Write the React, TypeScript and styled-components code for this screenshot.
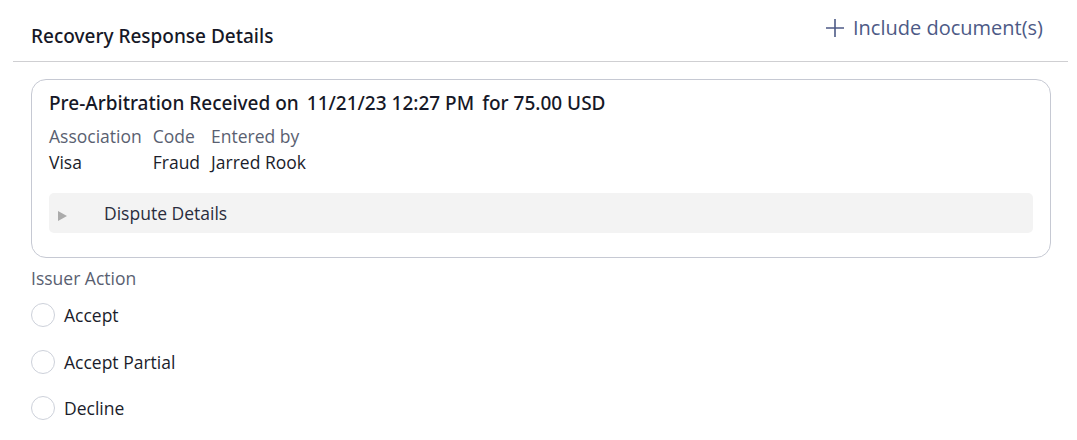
import styled, { createGlobalStyle } from "styled-components";

const GlobalStyle = createGlobalStyle`
  body {
    margin: 0;
    background: #ffffff;
    font-family: "Open Sans", "Noto Sans", sans-serif;
    color: #1b1d2b;
  }
`;

interface DetailColumn {
  label: string;
  value: string;
}

const columns: DetailColumn[] = [
  { label: "Association", value: "Visa" },
  { label: "Code", value: "Fraud" },
  { label: "Entered by", value: "Jarred Rook" },
];

const actions = ["Accept", "Accept Partial", "Decline"];

const App = () => {
  return (
    <Page>
      <GlobalStyle />
      <Header>
        <Title>Recovery Response Details</Title>
        <IncludeLink>
          <PlusIcon viewBox="0 0 20 20">
            <path d="M10 1v18M1 10h18" />
          </PlusIcon>
          Include document(s)
        </IncludeLink>
      </Header>
      <Content>
        <Card>
          <CardTitle>
            Pre-Arbitration Received on
            <Gap>11/21/23 12:27 PM</Gap>
            <Gap>for 75.00 USD</Gap>
          </CardTitle>
          <DetailGrid>
            {columns.map((c) => (
              <Label key={c.label}>{c.label}</Label>
            ))}
            {columns.map((c) => (
              <Value key={c.value}>{c.value}</Value>
            ))}
          </DetailGrid>
          <Disclosure>
            <Caret />
            <DisclosureText>Dispute Details</DisclosureText>
          </Disclosure>
        </Card>
        <ActionLabel>Issuer Action</ActionLabel>
        <RadioList>
          {actions.map((a) => (
            <RadioRow key={a}>
              <RadioCircle />
              <RadioText>{a}</RadioText>
            </RadioRow>
          ))}
        </RadioList>
      </Content>
    </Page>
  );
};

const Page = styled.div`
  padding: 0 9px 0 13px;
`;

const Header = styled.div`
  height: 62px;
  box-sizing: border-box;
  border-bottom: 1px solid #cfcfd2;
  display: flex;
  justify-content: space-between;
  align-items: flex-start;
  padding: 0 25px 0 18px;
`;

const Title = styled.h2`
  margin: 23px 0 0;
  font-family: "Noto Sans", "Open Sans", sans-serif;
  font-size: 19px;
  line-height: 26px;
  font-weight: 500;
  color: #161827;
`;

const IncludeLink = styled.a`
  margin-top: 14px;
  display: flex;
  align-items: center;
  gap: 8px;
  font-size: 20px;
  line-height: 28px;
  color: #4d5a86;
  cursor: pointer;
`;

const PlusIcon = styled.svg`
  width: 20px;
  height: 20px;
  stroke: #4d5a86;
  stroke-width: 1.6;
  fill: none;
`;

const Content = styled.div`
  padding: 0 17px 0 18px;
`;

const Card = styled.div`
  margin-top: 17px;
  border: 1px solid #c6c9d3;
  border-radius: 15px;
  padding: 10px 17px 24px;
`;

const CardTitle = styled.div`
  font-family: "Noto Sans", "Open Sans", sans-serif;
  font-size: 19px;
  line-height: 26px;
  font-weight: 500;
  color: #161827;
`;

const Gap = styled.span`
  margin-left: 8px;
`;

const DetailGrid = styled.div`
  margin-top: 7px;
  display: grid;
  grid-template-columns: repeat(3, auto);
  justify-content: start;
  column-gap: 11px;
  font-size: 17.5px;
  line-height: 26px;
`;

const Label = styled.span`
  color: #5a5f71;
`;

const Value = styled.span`
  color: #1b1d2b;
`;

const Disclosure = styled.div`
  margin-top: 18px;
  height: 40px;
  background: #f3f3f3;
  border-radius: 5px;
  display: flex;
  align-items: center;
  padding-left: 9px;
`;

const Caret = styled.span`
  width: 0;
  height: 0;
  margin-top: 5px;
  border-top: 5px solid transparent;
  border-bottom: 5px solid transparent;
  border-left: 9px solid #ababab;
`;

const DisclosureText = styled.span`
  margin-left: 37px;
  font-size: 17.5px;
  color: #2a2d3d;
`;

const ActionLabel = styled.div`
  margin-top: 8px;
  font-size: 17.5px;
  line-height: 24px;
  color: #5a5f71;
`;

const RadioList = styled.div`
  margin-top: 13px;
  display: flex;
  flex-direction: column;
  gap: 22.5px;
`;

const RadioRow = styled.label`
  display: flex;
  align-items: center;
  gap: 9px;
  cursor: pointer;
`;

const RadioCircle = styled.span`
  width: 24px;
  height: 24px;
  box-sizing: border-box;
  border: 1px solid #cdd1da;
  border-radius: 50%;
`;

const RadioText = styled.span`
  font-size: 17.5px;
  line-height: 24px;
  color: #1b1d2b;
`;

export default App;
